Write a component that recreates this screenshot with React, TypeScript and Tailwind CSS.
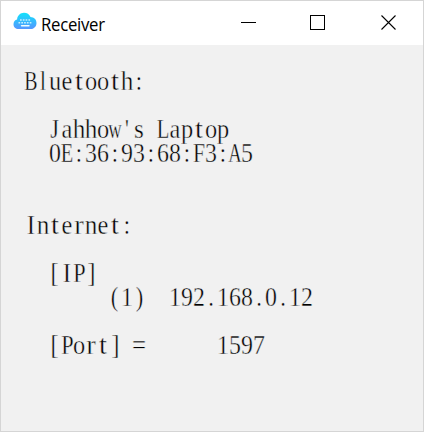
type Shape = { s: number; dx?: number };

// Horizontal scale of each glyph inside its 12px cell.
const shapes: Record<string, Shape> = {
  B: { s: 0.75 }, J: { s: 0.84, dx: -0.5 }, E: { s: 0.77 }, F: { s: 0.82 }, A: { s: 0.7 },
  L: { s: 0.78 }, P: { s: 0.84, dx: 0.5 }, I: { s: 0.94 }, l: { s: 0.8 }, u: { s: 0.92 },
  e: { s: 0.92 }, t: { s: 1.08 }, o: { s: 0.92 }, h: { s: 0.95 }, a: { s: 0.92 },
  w: { s: 0.7 }, s: { s: 0.95 }, p: { s: 0.92 }, n: { s: 0.95 }, r: { s: 1.08 },
  "[": { s: 0.9, dx: -0.5 }, "]": { s: 0.9, dx: 0.5 }, "(": { s: 0.85, dx: -0.5 }, ")": { s: 0.85, dx: 0.5 },
  "=": { s: 0.94 }, "'": { s: 0.8 }, ":": { s: 0.85 }, ".": { s: 0.85 },
};

function Line({ text }: { text: string }) {
  return (
    <div className="flex h-6 whitespace-pre">
      {Array.from(text).map((c, i) => {
        const g = shapes[c] ?? { s: 0.9 };
        return (
          <span
            key={i}
            className="flex h-6 w-3 shrink-0 justify-center"
            style={{ transform: `translateX(${g.dx ?? 0}px) scaleX(${g.s})` }}
          >
            {c}
          </span>
        );
      })}
    </div>
  );
}

const lines = [
  "Bluetooth:",
  "",
  "  Jahhow's Laptop",
  "  0E:36:93:68:F3:A5",
  "",
  "",
  "Internet:",
  "",
  "  [IP]",
  "       (1)  192.168.0.12",
  "",
  "  [Port] =      1597",
];

function CloudIcon() {
  return (
    <svg width="24" height="18" viewBox="0 0 24 18">
      <defs>
        <linearGradient id="cloud" x1="0" y1="0" x2="0" y2="1">
          <stop offset="0" stopColor="#12e2fb" />
          <stop offset="1" stopColor="#5596ff" />
        </linearGradient>
      </defs>
      <path
        d="M5.6 17C2.5 17 .5 15 .5 12.2c0-2.4 1.5-4.1 3.6-4.6C4.3 3.600 7.300.8 11 .8c3 0 5.400 1.500 6.500 4.200 3.500.1 6 2.600 6 5.900 0 3.500-2.500 6.100-6 6.100z"
        fill="url(#cloud)"
      />
      <path d="M7 8h10.500M5.500 10.800h13.500" stroke="#c4efff" strokeWidth="1.400" strokeDasharray="1.700 1.100" />
      <path d="M8.500 13.700h7.500" stroke="#f1fcff" strokeWidth="1.400" strokeLinecap="round" />
    </svg>
  );
}

export default function App() {
  return (
    <div className="flex h-[432px] w-[424px] flex-col border border-[#d5d5d5] bg-[#f1f1f1] text-black">
      <header className="flex h-11 shrink-0 items-start bg-white">
        <div className="ml-3 mt-[11px]">
          <CloudIcon />
        </div>
        <h1 className="ml-1 mt-[11px] w-[180px] origin-left scale-x-[0.93] whitespace-nowrap font-['Open_Sans',sans-serif] text-[18px] leading-6 tracking-[-0.3px]">
          Receiver
        </h1>
        <svg className="ml-5 mt-[13px]" width="156" height="16" fill="none" stroke="#000" shapeRendering="crispEdges">
          <path d="M0 8.500h15" />
          <path d="M69.500 1.500h14v14h-14z" />
          <path d="M140.500 1.500l14 14M154.500 1.500l-14 14" shapeRendering="auto" strokeWidth="1.100" />
        </svg>
      </header>
      <main className="ml-6 mt-6 font-['Liberation_Serif',serif] text-[26.5px] leading-6 [-webkit-text-stroke:0.4px_#f1f1f1]">
        {lines.map((line, i) => (
          <Line key={i} text={line} />
        ))}
      </main>
    </div>
  );
}
